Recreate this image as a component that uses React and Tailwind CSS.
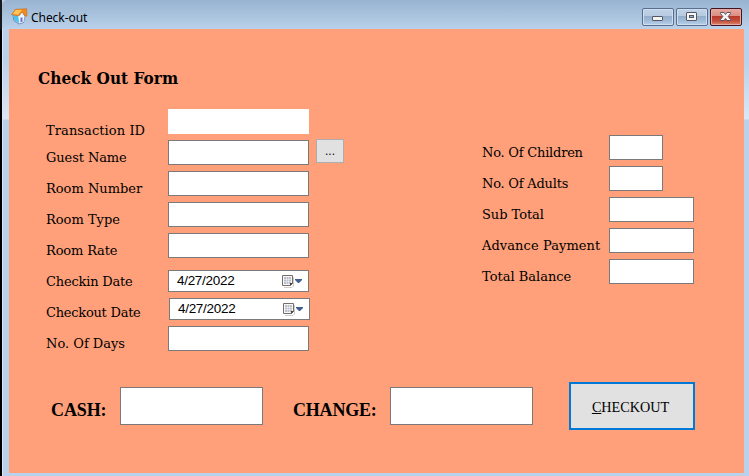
const condensed = "font-['DejaVu_Serif_Condensed','DejaVu_Serif',serif] [font-stretch:condensed]";
const regular = "font-['DejaVu_Serif',serif] [font-stretch:normal]";

function Label({ children, height = 'h-[31px]', tracking = '' }) {
  return (
    <div className={`text-[13px] leading-[18px] whitespace-nowrap ${regular} ${height} ${tracking}`}>
      <span>{children}</span>
    </div>
  );
}

function Field({ className = 'w-[141px] h-[25px]' }) {
  return <div className={`shrink-0 border border-[#7a7a7a] bg-white ${className}`} />;
}

function DateField({ className = '' }) {
  return (
    <div className={`flex h-[22px] w-[141px] shrink-0 items-center border border-[#7a7a7a] bg-white pl-2 pr-[5px] ${className}`}>
      <span className="font-['Liberation_Sans',sans-serif] text-[13.5px] leading-[20px] tracking-[-0.3px]">4/27/2022</span>
      <svg className="ml-auto" width="22" height="14" viewBox="0 0 22 14">
        <path d="M3 13.5h8l1.500-1.500V3" fill="none" stroke="#cfccca" />
        <path d="M1.500 1.500h10v8l-2 2h-8z" fill="#f8f8f8" stroke="#776e6b" />
        <path d="M9 12V9h3z" fill="#4d4645" />
        <path d="M3 3h7v6H9v1H3z" fill="#b9c0ca" />
        <path d="M3 5.500h7M3 7.500h7M5.500 3v7M7.500 3v7" stroke="#eef0f3" strokeWidth=".6" />
        <path d="M14 5h7v1l-3 3h-1l-3-3z" fill="#405e91" />
      </svg>
    </div>
  );
}

function CaptionButton({ kind }) {
  const close = kind === 'close';
  const tone = close
    ? 'border-[#431422] bg-[linear-gradient(#e7a79d_0,#dc8d80_45%,#b8392b_46%,#c34f39_75%,#dc8b72)] shadow-[inset_0_0_0_1px_#e5aaa2]'
    : 'border-[#5a6f8e] bg-[linear-gradient(#c1d3e7_0,#b6cae0_45%,#94aeca_46%,#a2bdd9_75%,#b8d1ec)] shadow-[inset_0_0_0_1px_#cfdeef]';
  return (
    <div className={`flex h-[18px] w-8 items-center justify-center rounded-[2px] border ${tone}`}>
      <svg width="14" height="12" viewBox="0 0 14 12">
        {kind === 'min' && <rect x="1.5" y="5.5" width="10" height="4" rx=".5" fill="#f5f3ee" stroke="#535666" />}
        {kind === 'max' && (
          <>
            <rect x="1.5" y="1.5" width="10" height="8" rx=".5" fill="#f7f6f2" stroke="#535666" />
            <rect x="4.5" y="4.5" width="4" height="2" fill="#91b5d9" stroke="#535666" />
          </>
        )}
        {close && (
          <path d="M1.500 1.500h3.500l1.500 2 1.500-2h3.500v1L9.200 5.500l2.300 3v1H8l-1.500-2-1.500 2H1.500v-1l2.300-3-2.300-3z" fill="#f5f4f3" stroke="#565565" strokeLinejoin="round" />
        )}
      </svg>
    </div>
  );
}

function AppIcon() {
  return (
    <svg width="17" height="17" viewBox="0 0 17 17">
      <path d="M2 7l.8 5.500L8 16l4.500-1.500L14 7z" fill="#dff2fd" stroke="#5874ad" strokeWidth=".8" />
      <path d="M2.400 7.300L7 8l1.300 7.300-5-3z" fill="#4bc2ea" />
      <path d="M8 8.500l3-4 2.500 4-1 5.300-3.800 1.600z" fill="#eef8ff" />
      <path d="M9.500 9.500h2v4l-2 1z" fill="#6670cb" />
      <path d="M.5 6.500L4.500 1.300l11-.5.5 7-1.500.7L11.200 4 7.500 8z" fill="#f68a14" stroke="#be6c29" strokeWidth=".6" />
      <path d="M1.700 6l3.100-4L11 1.700 7.200 6.800z" fill="#ffc45a" />
    </svg>
  );
}

export default function App() {
  return (
    <div className="flex h-[476px] w-[749px] overflow-hidden bg-[#b9d1ea] text-black">
      <div className="w-[2px] shrink-0 bg-[linear-gradient(#17191f_0,#17191f_29px,#000_30px)]" />
      <div className="flex min-w-0 flex-1 flex-col rounded-tl-[5px] bg-[linear-gradient(#99b4d1_0,#b9d1ea_29px,#b9d1ea_60px,#dbe7f4_119px,#b9d1ea_120px)] shadow-[inset_1px_0_0_#dae7f5]">
        <header className="flex h-[29px] shrink-0 items-start rounded-tl-[5px] bg-[linear-gradient(#98b3d0,#b9d1ea)] pl-[9px] pr-[7px] pt-2">
          <AppIcon />
          <span className="ml-[3px] font-['Noto_Sans',sans-serif] text-[12px] leading-[19px] tracking-[-0.05px]">Check-out</span>
          <div className="ml-auto flex gap-[2px]">
            <CaptionButton kind="min" />
            <CaptionButton kind="max" />
            <CaptionButton kind="close" />
          </div>
        </header>
        <main className={`ml-[7px] mr-[5px] h-[444px] bg-[#ffa07a] ${condensed}`}>
          <h1 className="h-[80px] pl-[29px] pt-[37px] text-[17px] leading-[24px] font-bold tracking-[0.05px] whitespace-nowrap">Check Out Form</h1>
          <div className="flex h-[273px] pl-[37px]">
            <div className="w-[122px] pt-[13px]">
              <Label height="h-[27px]" tracking="tracking-[0.08px]">Transaction ID</Label>
              <Label tracking="tracking-[-0.1px]">Guest Name</Label>
              <Label>Room Number</Label>
              <Label>Room Type</Label>
              <Label tracking="tracking-[-0.15px]">Room Rate</Label>
              <Label tracking="tracking-[-0.2px]">Checkin Date</Label>
              <Label tracking="tracking-[-0.25px]">Checkout Date</Label>
              <Label>No. Of Days</Label>
            </div>
            <div className="flex w-[142px] flex-col gap-[6px]">
              <div className="h-[25px] w-[141px] shrink-0 bg-white" />
              <Field />
              <Field />
              <Field />
              <Field />
              <DateField className="mt-[6px]" />
              <DateField className="ml-px" />
              <Field />
            </div>
            <div className="ml-[6px] mt-[30px] flex h-6 w-7 items-center justify-center border border-[#adadad] bg-[#e1e1e1] font-['Liberation_Sans',sans-serif] text-[12px]">...</div>
            <div className="ml-[138px] w-[127px] pt-[35px]">
              <Label tracking="tracking-[-0.22px]">No. Of Children</Label>
              <Label tracking="tracking-[-0.22px]">No. Of Adults</Label>
              <Label tracking="tracking-[-0.05px]">Sub Total</Label>
              <Label tracking="tracking-[0.08px]">Advance Payment</Label>
              <Label>Total Balance</Label>
            </div>
            <div className="flex flex-col gap-[6px] pt-[26px]">
              <Field className="h-[25px] w-[54px]" />
              <Field className="h-[25px] w-[54px]" />
              <Field className="h-[25px] w-[85px]" />
              <Field className="h-[25px] w-[85px]" />
              <Field className="h-[25px] w-[85px]" />
            </div>
          </div>
          <div className="flex pl-[42px] font-['Liberation_Serif',serif]">
            <span className="mt-[15px] w-[69px] text-[18px] leading-[26px] font-bold tracking-[-0.1px]">CASH:</span>
            <Field className="mt-[5px] h-[38px] w-[143px]" />
            <span className="ml-[30px] mt-[15px] w-[97px] text-[18px] leading-[26px] font-bold tracking-[-0.2px]">CHANGE:</span>
            <Field className="mt-[5px] h-[38px] w-[143px]" />
            <button className="ml-9 h-12 w-[126px] border-2 border-[#0078d7] bg-[#e1e1e1] pr-[3px] pt-[3px] text-[14.2px]">
              <span className="underline">C</span>HECKOUT
            </button>
          </div>
        </main>
      </div>
    </div>
  );
}
